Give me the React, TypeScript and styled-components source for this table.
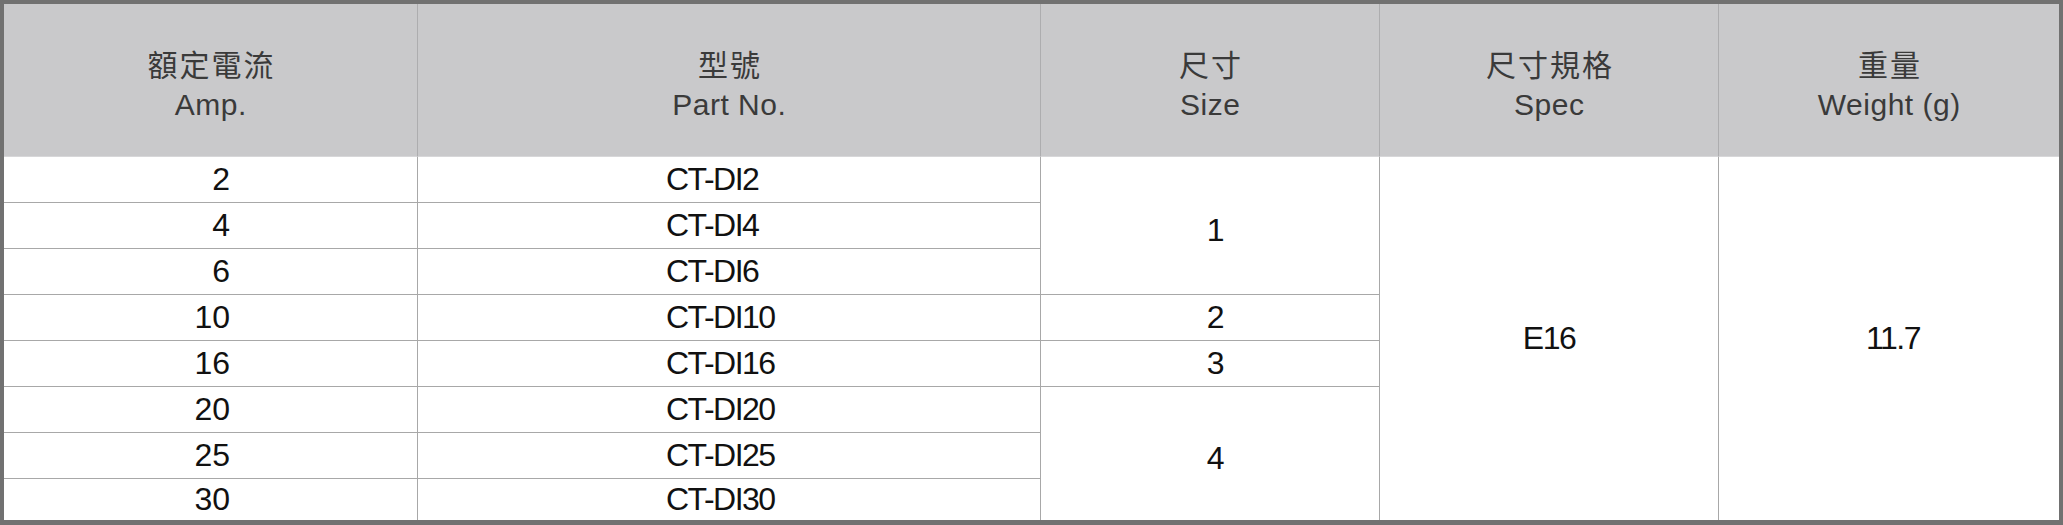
import React from 'react';
import styled, { createGlobalStyle } from 'styled-components';

const Global = createGlobalStyle`
  html, body { margin: 0; padding: 0; background: #ffffff; }
  body { width: 2063px; height: 525px; overflow: hidden; }
`;

const LINE = '#a8a8a8';

const Table = styled.div`
  box-sizing: border-box;
  width: 2063px;
  height: 525px;
  border-style: solid;
  border-color: #717171;
  border-width: 4px 4px 5px 4px;
  display: grid;
  grid-template-columns: 414px 623px 339px 339px 1fr;
  grid-template-rows: 153px repeat(7, 46px) 1fr;
  background: #ffffff;
`;

const HeadCell = styled.div<{ $last?: boolean }>`
  box-sizing: border-box;
  grid-row: 1;
  background: #c9c9cb;
  border-right: ${(p) => (p.$last ? 'none' : '1px solid #adadaf')};
  border-bottom: 1px solid #d7d7d9;
  padding-top: 5px;
  display: flex;
  flex-direction: column;
  align-items: center;
  justify-content: center;
  gap: 0;
  color: #3a3a3a;
`;

const HeadZh = styled.span`
  font-family: "Noto Sans CJK TC", "Noto Sans CJK SC", sans-serif;
  font-size: 30px;
  line-height: 44px;
  letter-spacing: 2px;
  padding-left: 2px;
`;

const HeadEn = styled.span`
  font-family: "Liberation Sans", Arial, sans-serif;
  font-size: 30px;
  line-height: 40px;
  letter-spacing: 0.5px;
  padding-left: 0.5px;
`;

const BodyCell = styled.div<{ $row: number; $span?: number; $end?: boolean; $last?: boolean }>`
  box-sizing: border-box;
  grid-row: ${(p) => p.$row} / span ${(p) => p.$span ?? 1};
  display: flex;
  align-items: center;
  border-right: ${(p) => (p.$last ? 'none' : `1px solid ${LINE}`)};
  border-bottom: ${(p) => (p.$end ? 'none' : `1px solid ${LINE}`)};
  font-family: "Liberation Sans", Arial, sans-serif;
  font-size: 32px;
  color: #111111;
  background: #ffffff;
`;

const AmpCell = styled(BodyCell)`
  grid-column: 1;
  justify-content: flex-end;
  padding-right: 187px;
`;

const PartCell = styled(BodyCell)`
  grid-column: 2;
  justify-content: flex-start;
  padding-left: 248px;
  letter-spacing: -1.5px;
`;

const SizeCell = styled(BodyCell)`
  grid-column: 3;
  justify-content: center;
  padding-left: 10px;
  padding-top: ${(p) => ((p.$span ?? 1) > 1 ? 10 : 0)}px;
  letter-spacing: -1.5px;
`;

const MergedCell = styled(BodyCell)<{ $col: number; $shift?: number }>`
  grid-column: ${(p) => p.$col};
  justify-content: center;
  padding-left: ${(p) => p.$shift ?? 0}px;
  letter-spacing: -1.5px;
`;

const headers = [
  { zh: '額定電流', en: 'Amp.' },
  { zh: '型號', en: 'Part No.' },
  { zh: '尺寸', en: 'Size' },
  { zh: '尺寸規格', en: 'Spec' },
  { zh: '重量', en: 'Weight (g)' },
];

const rows = [
  { amp: '2', part: 'CT-DI2' },
  { amp: '4', part: 'CT-DI4' },
  { amp: '6', part: 'CT-DI6' },
  { amp: '10', part: 'CT-DI10' },
  { amp: '16', part: 'CT-DI16' },
  { amp: '20', part: 'CT-DI20' },
  { amp: '25', part: 'CT-DI25' },
  { amp: '30', part: 'CT-DI30' },
];

const sizes = [
  { label: '1', start: 0, span: 3 },
  { label: '2', start: 3, span: 1 },
  { label: '3', start: 4, span: 1 },
  { label: '4', start: 5, span: 3 },
];

export default function App() {
  const total = rows.length;
  return (
    <>
      <Global />
      <Table>
        {headers.map((h, i) => (
          <HeadCell key={h.en} $last={i === headers.length - 1}>
            <HeadZh>{h.zh}</HeadZh>
            <HeadEn>{h.en}</HeadEn>
          </HeadCell>
        ))}
        {rows.map((r, i) => (
          <React.Fragment key={r.part}>
            <AmpCell $row={i + 2} $end={i === total - 1}>{r.amp}</AmpCell>
            <PartCell $row={i + 2} $end={i === total - 1}>{r.part}</PartCell>
          </React.Fragment>
        ))}
        {sizes.map((s) => (
          <SizeCell key={s.label} $row={s.start + 2} $span={s.span} $end={s.start + s.span === total}>
            {s.label}
          </SizeCell>
        ))}
        <MergedCell $col={4} $row={2} $span={total} $end>E16</MergedCell>
        <MergedCell $col={5} $row={2} $span={total} $end $last $shift={8}>11.7</MergedCell>
      </Table>
    </>
  );
}
